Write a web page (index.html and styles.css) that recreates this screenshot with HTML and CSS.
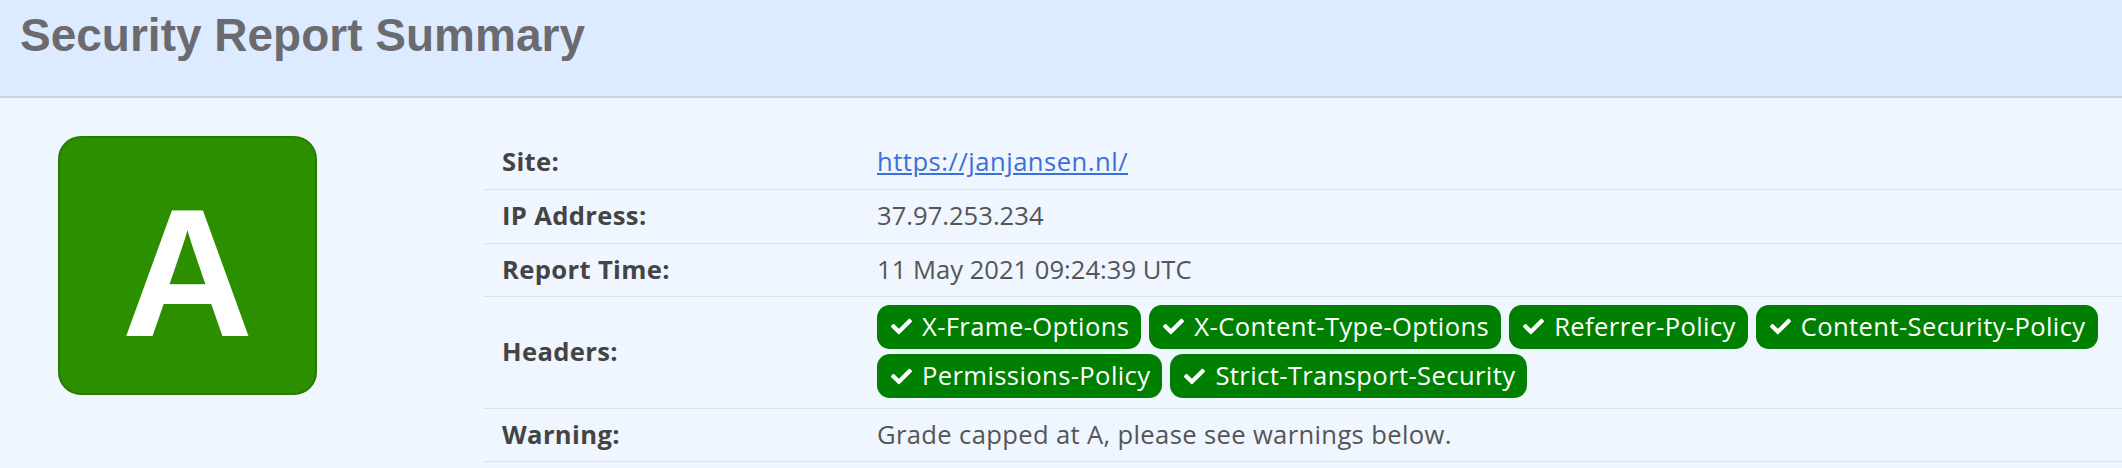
FILE: index.html
```html
<!DOCTYPE html>
<html lang="en">
<head>
<meta charset="utf-8">
<title>Security Report Summary</title>
<link rel="stylesheet" href="styles.css">
</head>
<body>
<header class="report-header">
  <h1 class="report-title">Security Report Summary</h1>
</header>
<main class="summary">
  <div class="grade-col">
    <div class="grade">A</div>
  </div>
  <table class="report-table">
    <tbody>
      <tr>
        <th>Site:</th>
        <td><a class="site-link" href="#">https://janjansen.nl/</a></td>
      </tr>
      <tr>
        <th>IP Address:</th>
        <td class="numeric">37.97.253.234</td>
      </tr>
      <tr>
        <th>Report Time:</th>
        <td class="numeric">11 May 2021 09:24:39 UTC</td>
      </tr>
      <tr>
        <th>Headers:</th>
        <td>
          <ul class="badges">
            <li class="badge"><svg class="check" viewBox="0 0 512 512"><path d="M173.9 439.4l-166.4-166.4c-10-10-10-26.2 0-36.2l36.2-36.2c10-10 26.2-10 36.2 0L192 312.7 432.1 72.6c10-10 26.2-10 36.2 0l36.2 36.2c10 10 10 26.2 0 36.2l-294.4 294.4c-10 10-26.2 10-36.2 0z"/></svg>X-Frame-Options</li>
            <li class="badge"><svg class="check" viewBox="0 0 512 512"><path d="M173.9 439.4l-166.4-166.4c-10-10-10-26.2 0-36.2l36.2-36.2c10-10 26.2-10 36.2 0L192 312.7 432.1 72.6c10-10 26.2-10 36.2 0l36.2 36.2c10 10 10 26.2 0 36.2l-294.4 294.4c-10 10-26.2 10-36.2 0z"/></svg>X-Content-Type-Options</li>
            <li class="badge"><svg class="check" viewBox="0 0 512 512"><path d="M173.9 439.4l-166.4-166.4c-10-10-10-26.2 0-36.2l36.2-36.2c10-10 26.2-10 36.2 0L192 312.7 432.1 72.6c10-10 26.2-10 36.2 0l36.2 36.2c10 10 10 26.2 0 36.2l-294.4 294.4c-10 10-26.2 10-36.2 0z"/></svg>Referrer-Policy</li>
            <li class="badge"><svg class="check" viewBox="0 0 512 512"><path d="M173.9 439.4l-166.4-166.4c-10-10-10-26.2 0-36.2l36.2-36.2c10-10 26.2-10 36.2 0L192 312.7 432.1 72.6c10-10 26.2-10 36.2 0l36.2 36.2c10 10 10 26.2 0 36.2l-294.4 294.4c-10 10-26.2 10-36.2 0z"/></svg>Content-Security-Policy</li>
            <li class="badge"><svg class="check" viewBox="0 0 512 512"><path d="M173.9 439.4l-166.4-166.4c-10-10-10-26.2 0-36.2l36.2-36.2c10-10 26.2-10 36.2 0L192 312.7 432.1 72.6c10-10 26.2-10 36.2 0l36.2 36.2c10 10 10 26.2 0 36.2l-294.4 294.4c-10 10-26.2 10-36.2 0z"/></svg>Permissions-Policy</li>
            <li class="badge"><svg class="check" viewBox="0 0 512 512"><path d="M173.9 439.4l-166.4-166.4c-10-10-10-26.2 0-36.2l36.2-36.2c10-10 26.2-10 36.2 0L192 312.7 432.1 72.6c10-10 26.2-10 36.2 0l36.2 36.2c10 10 10 26.2 0 36.2l-294.4 294.4c-10 10-26.2 10-36.2 0z"/></svg>Strict-Transport-Security</li>
          </ul>
        </td>
      </tr>
      <tr>
        <th>Warning:</th>
        <td class="warning">Grade capped at A, please see warnings below.</td>
      </tr>
    </tbody>
  </table>
</main>
</body>
</html>
```
FILE: styles.css
```css
html, body {
  margin: 0;
  padding: 0;
}

body {
  background: #eff6ff;
  font-family: "Open Sans", "Noto Sans", sans-serif;
  font-size: 25.6px;
  color: #555;
  overflow: hidden;
}

.report-header {
  background: #dcebff;
  border-bottom: 2px solid #c6d6df;
  padding: 9px 20px 34px;
}

.report-title {
  margin: 0;
  font-family: "Liberation Sans", Arial, sans-serif;
  font-weight: bold;
  font-size: 46px;
  line-height: 53px;
  color: #6b6b6f;
}

.summary {
  display: flex;
  align-items: flex-start;
  padding-top: 38px;
}

.grade-col {
  margin-left: 58px;
  flex: 0 0 auto;
}

.grade {
  box-sizing: border-box;
  width: 259px;
  height: 259px;
  border: 2px solid #277c00;
  border-radius: 23px;
  background: #2c8f00;
  color: #fff;
  font-family: "Liberation Sans", Arial, sans-serif;
  font-weight: bold;
  font-size: 182px;
  line-height: 1;
  display: flex;
  align-items: center;
  justify-content: center;
  padding-top: 15px;
}

.report-table {
  flex: 1 1 auto;
  margin-left: 167px;
  border-collapse: collapse;
  line-height: 38.4px;
  letter-spacing: 0.35px;
}

.report-table th,
.report-table td {
  padding: 7.2px 18px;
  border-bottom: 1.6px solid #dee2e6;
  vertical-align: middle;
  text-align: left;
}

.report-table td {
  padding-right: 4px;
  color: #555;
}

.report-table th {
  width: 339px;
  font-weight: bold;
  color: #444;
}

.report-table td.numeric {
  letter-spacing: 0;
}

.site-link {
  color: #3a70d8;
  text-decoration: underline;
  letter-spacing: 0.5px;
}

.warning {
  color: #5f5f5f;
}

.badges {
  list-style: none;
  margin: 0;
  padding: 0 0 2px;
  display: flex;
  flex-wrap: wrap;
  column-gap: 8px;
  row-gap: 5px;
}

.badge {
  display: flex;
  align-items: center;
  background: #008000;
  color: #fff;
  border-radius: 12.8px;
  padding: 3px 12px 3px 14px;
  white-space: nowrap;
  letter-spacing: 0.38px;
}

.check {
  width: 21px;
  height: 21px;
  fill: #fff;
  margin-right: 10px;
  flex: 0 0 auto;
}
```
